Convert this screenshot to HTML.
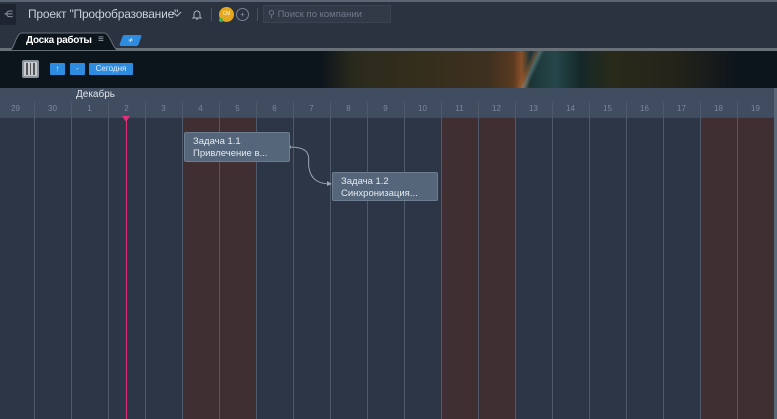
<!DOCTYPE html>
<html><head><meta charset="utf-8"><style>
*{margin:0;padding:0;box-sizing:border-box}
body{width:777px;height:419px;overflow:hidden;background:#2c3646;font-family:"Liberation Sans",sans-serif;position:relative}
.abs{position:absolute}
.top{left:0;top:0;width:777px;height:29px;background:#2b3240;border-top:2px solid #5a6472}
.tabs{left:0;top:29px;width:777px;height:21px;background:#2b3240}
.banner{left:0;top:50px;width:777px;height:38px;background:#0c141c;border-top:1px solid #6a7078}
.hdr{left:0;top:88px;width:777px;height:30px;background:#404c60}
.col{position:absolute;top:88px;height:331px;width:37px}
.we{background:#3f2e32}
.line{position:absolute;top:102px;width:1px;height:317px;background:#4e596b}
.day{position:absolute;top:104px;width:37px;text-align:center;font-size:8px;color:#7a879a}
.btn{position:absolute;top:63px;height:12px;background:#2d8be0;color:#dceeff;font-size:8px;line-height:12px;text-align:center;border-radius:1px}
.task{position:absolute;background:#55657a;border:1px solid #6e7d90;border-radius:2px;color:#e4e9ef;font-size:9.5px;line-height:12px;padding:3px 8px}
</style></head><body>
<div class="abs top"></div>
<div class="abs" style="left:0;top:4px;width:16px;height:21px;background:#1f2530"></div>
<div class="abs" style="left:4px;top:9px;color:#aab3c0;font-size:9px">⋲</div>
<div class="abs" style="left:28px;top:7px;color:#c9d0da;font-size:12px;letter-spacing:-0.2px">Проект "Профобразование"</div>
<svg class="abs" style="left:172px;top:10px" width="10" height="8"><path d="M1 2l4 4 4-4" stroke="#aab3c0" fill="none" stroke-width="1.2"/></svg>
<svg class="abs" style="left:191px;top:8px" width="12" height="13"><path d="M3 9V6a3 3 0 0 1 6 0v3l1 1H2z M5 11h2" stroke="#aab3c0" fill="none"/></svg>
<div class="abs" style="left:211px;top:8px;width:1px;height:13px;background:#4a5260"></div>
<div class="abs" style="left:219px;top:7px;width:15px;height:15px;border-radius:50%;background:#e3a820;font-size:5px;color:#fff;line-height:15px;text-align:center">СМ</div>
<div class="abs" style="left:219px;top:18px;width:4px;height:4px;border-radius:50%;background:#4caf50"></div>
<div class="abs" style="left:236px;top:8px;width:13px;height:13px;border-radius:50%;border:1px solid #7a8494;color:#8a94a4;font-size:8px;line-height:11px;text-align:center">+</div>
<div class="abs" style="left:257px;top:8px;width:1px;height:13px;background:#4a5260"></div>
<div class="abs" style="left:263px;top:5px;width:128px;height:18px;background:#323a48;border:1px solid #3a4352"></div>
<div class="abs" style="left:268px;top:9px;color:#6f7a8a;font-size:9.5px">⚲ Поиск по компании</div>
<div class="abs tabs"></div>
<div class="abs" style="left:0;top:48px;width:777px;height:2px;background:#6a7078"></div>
<svg class="abs" style="left:8px;top:31px" width="112" height="20"><path d="M0 19h2C6 19 8 2 14 2h82c6 0 9 17 14 17h2" fill="#0c141c" stroke="#6a7078"/></svg>
<div class="abs" style="left:26px;top:35px;color:#fff;font-size:10px;font-weight:bold;letter-spacing:-0.3px">Доска работы</div>
<div class="abs" style="left:98px;top:34px;color:#aab3c0;font-size:10px">≡</div>
<div class="abs" style="left:121px;top:35px;width:19px;height:11px;background:#2d8be0;border-radius:2px;transform:skewX(-20deg);color:#fff;font-size:9px;line-height:11px;text-align:center">+</div>
<div class="abs banner"></div>
<div class="abs" style="left:320px;top:51px;width:420px;height:37px;background:linear-gradient(90deg,#0c141c 0%,#2a2a1c 8%,#352e1c 25%,#3e3020 40%,#5a3a20 46%,#8a5028 48%,#1c3436 50%,#25474a 56%,#152828 62%,#2a2a1a 70%,#22221a 86%,#0c141c 100%)"></div>
<div class="abs" style="left:500px;top:51px;width:60px;height:37px;background:linear-gradient(115deg,transparent 42%,#a06030 48%,#7a9a9a 52%,transparent 58%);opacity:.5"></div>
<div class="abs" style="left:22px;top:60px;width:17px;height:18px;background:#c8ccd2;border-radius:2px;border:2px solid #8a929c"></div>
<div class="abs" style="left:26px;top:63px;width:9px;height:12px;border-left:2px solid #555;border-right:2px solid #555"></div>
<div class="abs" style="left:30px;top:63px;width:1px;height:12px;background:#555"></div>
<div class="btn" style="left:50px;width:15px">↑</div>
<div class="btn" style="left:70px;width:15px">-</div>
<div class="btn" style="left:89px;width:44px">Сегодня</div>
<div class="abs hdr"></div>
<div class="abs" style="left:0;top:117px;width:777px;height:1px;background:#3e4a5c"></div>
<div class="col we" style="left:182px;top:118px;height:301px;width:74px"></div>
<div class="col we" style="left:441px;top:118px;height:301px;width:74px"></div>
<div class="col we" style="left:700px;top:118px;height:301px;width:74px"></div>
<div class="abs" style="left:774px;top:88px;width:3px;height:331px;background:#5a6578"></div>
<div class="abs" style="left:76px;top:89px;color:#dfe5ec;font-size:10px">Декабрь</div>
<div id="g"></div>
<div class="abs" style="left:126px;top:118px;width:1px;height:301px;background:#e0307a"></div>
<div class="abs" style="left:122px;top:116px;width:0;height:0;border-left:4px solid transparent;border-right:4px solid transparent;border-top:6px solid #e0307a"></div>
<svg class="abs" style="left:285px;top:140px" width="60" height="50"><path d="M4 7C30 7 22 20 24 28 26 40 34 44 46 44" stroke="#9aa6b4" fill="none"/><circle cx="4" cy="7" r="2" fill="#9aa6b4"/><path d="M42 41l5 3-5 2z" fill="#9aa6b4"/></svg>
<div class="task" style="left:184px;top:132px;width:106px;height:30px">Задача 1.1<br>Привлечение в...</div>
<div class="task" style="left:332px;top:172px;width:106px;height:29px">Задача 1.2<br>Синхронизация...</div>
<script>
var d=[29,30,1,2,3,4,5,6,7,8,9,10,11,12,13,14,15,16,17,18,19],h='';
for(var i=0;i<21;i++){var l=-3+37*i;h+='<div class="day" style="left:'+l+'px">'+d[i]+'</div>';if(i<20)h+='<div class="line" style="left:'+(l+37)+'px"></div>';}
document.getElementById('g').innerHTML=h;
</script>
</body></html>
